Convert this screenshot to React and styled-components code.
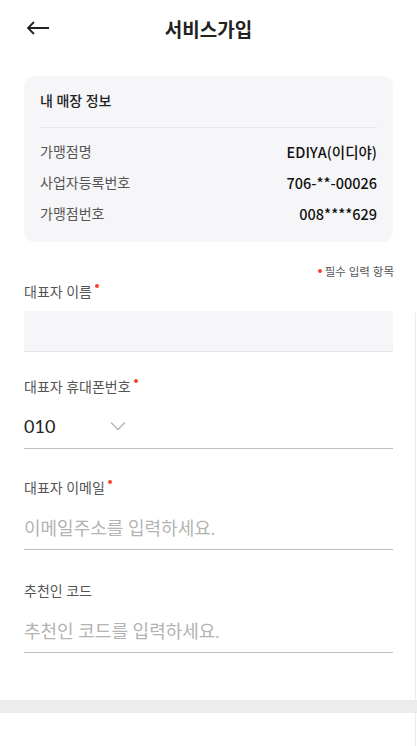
import React from "react";
import styled, { createGlobalStyle } from "styled-components";

const GlobalStyle = createGlobalStyle`
  html, body {
    margin: 0;
    padding: 0;
    background: #fff;
  }
  body {
    font-family: Lato, "Noto Sans CJK KR", sans-serif;
    color: #111;
  }
`;

const Page = styled.div`
  position: relative;
  width: 417px;
  min-height: 746px;
  background: #fff;
  overflow: hidden;
`;

const Header = styled.header`
  position: relative;
  height: 56px;
  display: flex;
  align-items: center;
  justify-content: center;
`;

const BackButton = styled.button`
  position: absolute;
  left: 22px;
  top: 16px;
  width: 32px;
  height: 24px;
  border: 0;
  background: none;
  padding: 0;
  display: flex;
  align-items: center;
  justify-content: center;
`;

const Title = styled.h1`
  margin: 0;
  font-family: "Noto Sans CJK KR", sans-serif;
  font-size: 19px;
  font-weight: 700;
  color: #222;
`;

const Content = styled.main`
  padding: 20px 24px 0;
`;

const Card = styled.section`
  background: #f6f6f8;
  border-radius: 10px;
  padding: 14px 16px 17px;
`;

const CardTitle = styled.h2`
  margin: 0;
  font-size: 14px;
  font-weight: 500;
  color: #222;
  line-height: 22px;
  padding-bottom: 15px;
  border-bottom: 1px solid #e8e8ec;
`;

const InfoList = styled.dl`
  margin: 13px 0 0;
  display: grid;
  grid-template-columns: 1fr auto;
  row-gap: 9px;
`;

const InfoLabel = styled.dt`
  font-size: 14px;
  color: #555;
  line-height: 22px;
`;

const InfoValue = styled.dd`
  margin: 0;
  font-family: "Noto Sans CJK KR", sans-serif;
  font-size: 14.5px;
  font-weight: 500;
  color: #111;
  text-align: right;
  line-height: 22px;
`;

const RequiredNote = styled.div`
  margin-top: 21px;
  display: flex;
  justify-content: flex-end;
  align-items: center;
  gap: 3px;
  font-size: 11.5px;
  color: #555;
  margin-right: -1px;
`;

const Dot = styled.span`
  width: 4px;
  height: 4px;
  border-radius: 50%;
  background: #f2452f;
`;

const Field = styled.div`
  margin-top: ${(p) => p.$gap}px;
`;

const Label = styled.label`
  display: inline-flex;
  align-items: flex-start;
  font-size: 14px;
  color: #555;
  line-height: 20px;
`;

const Star = styled.span`
  width: 4px;
  height: 4px;
  border-radius: 50%;
  background: #f2452f;
  margin-left: 3px;
  margin-top: 2px;
`;

const FilledBox = styled.div`
  margin-top: 9px;
  height: 40px;
  background: #f6f6f8;
  border-bottom: 1px solid #e6e6ea;
`;

const LineBox = styled.div`
  height: 45px;
  margin-top: ${(p) => p.$top}px;
  display: flex;
  align-items: center;
  border-bottom: 1px solid #bdbdbd;
  font-size: 18px;
  color: ${(p) => (p.$placeholder ? "#b3b3b3" : "#222")};
`;

const SelectValue = styled.span`
  width: 86px;
`;

const Band = styled.div`
  margin-top: 47px;
  height: 12px;
  background: #ececec;
  border-top: 1px solid #e8e8e8;
`;

const EdgeLine = styled.div`
  position: absolute;
  right: 1px;
  top: 313px;
  bottom: 0;
  width: 1px;
  background: #ececec;
`;

const Chevron = () => (
  <svg width="16" height="10" viewBox="0 0 16 10" fill="none">
    <path d="M1 1.5L8 8.5L15 1.5" stroke="#b5b5b5" strokeWidth="1.4" />
  </svg>
);

const ArrowLeft = () => (
  <svg width="24" height="14" viewBox="0 0 24 14" fill="none">
    <path d="M23 7H2M8 1L2 7L8 13" stroke="#222" strokeWidth="1.8" />
  </svg>
);

const info = [
  ["가맹점명", "EDIYA(이디야)"],
  ["사업자등록번호", "706-**-00026"],
  ["가맹점번호", "008****629"],
];

export default function App() {
  return (
    <Page>
      <GlobalStyle />
      <Header>
        <BackButton aria-label="뒤로">
          <ArrowLeft />
        </BackButton>
        <Title>서비스가입</Title>
      </Header>
      <Content>
        <Card>
          <CardTitle>내 매장 정보</CardTitle>
          <InfoList>
            {info.map(([k, v]) => (
              <React.Fragment key={k}>
                <InfoLabel>{k}</InfoLabel>
                <InfoValue>{v}</InfoValue>
              </React.Fragment>
            ))}
          </InfoList>
        </Card>

        <RequiredNote>
          <Dot />
          필수 입력 항목
        </RequiredNote>

        <Field $gap={2}>
          <Label>
            대표자 이름<Star />
          </Label>
          <FilledBox />
        </Field>

        <Field $gap={24}>
          <Label>
            대표자 휴대폰번호<Star />
          </Label>
          <LineBox $top={6}>
            <SelectValue>010</SelectValue>
            <Chevron />
          </LineBox>
        </Field>

        <Field $gap={28}>
          <Label>
            대표자 이메일<Star />
          </Label>
          <LineBox $top={6} $placeholder>
            이메일주소를 입력하세요.
          </LineBox>
        </Field>

        <Field $gap={30}>
          <Label>추천인 코드</Label>
          <LineBox $top={6} $placeholder>
            추천인 코드를 입력하세요.
          </LineBox>
        </Field>
      </Content>
      <Band />
      <EdgeLine />
    </Page>
  );
}
